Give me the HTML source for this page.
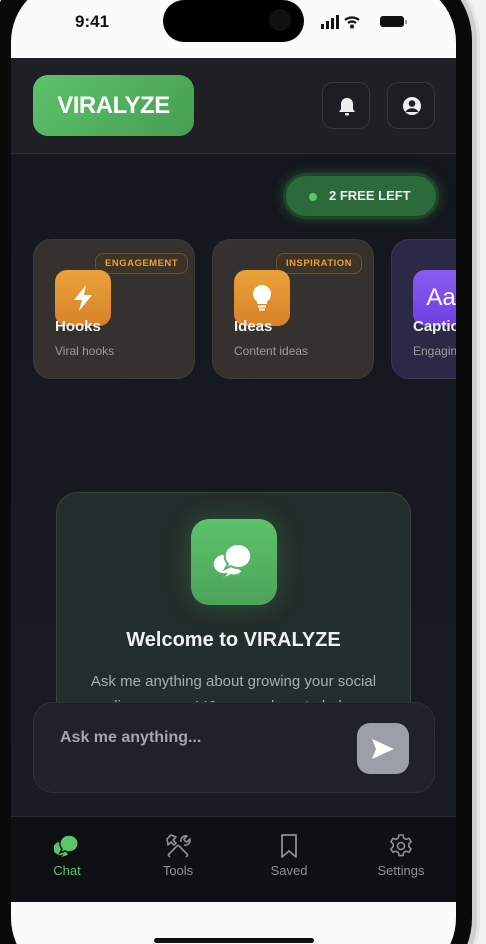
<!DOCTYPE html>
<html style="width:486px;height:944px;overflow:hidden"><head><meta charset="utf-8"><style>
*{box-sizing:border-box;margin:0;padding:0}
body{width:486px;height:944px;overflow:hidden;background:#f2f2f2;font-family:"Liberation Sans","DejaVu Sans",sans-serif;position:relative}
.wrap{position:absolute;left:0;top:0;width:486px;height:944px;overflow:hidden}
.rim{position:absolute;left:-14px;top:-40px;width:494px;height:1040px;border-radius:80px;background:#cfcfcf;border:3px solid #e6e6e6}
.bez{position:absolute;left:-10px;top:-36px;width:482px;height:1030px;border-radius:76px;background:#0a0a0a}
.screen{position:absolute;left:11px;top:-20px;width:445px;height:1000px;border-radius:62px;background:#fbfbfb;overflow:hidden}
.time{position:absolute;left:75px;top:12px;font-size:17px;font-weight:bold;color:#111}
.island{position:absolute;left:163px;top:0;width:141px;height:42px;border-radius:21px;background:#000}
.app{position:absolute;left:11px;top:58px;width:445px;height:844px;background:linear-gradient(#13161c,#1a1d24);overflow:hidden}
.hdr{position:absolute;left:0;top:0;width:445px;height:96px;background:#1e2025;border-bottom:1px solid #2a2d33}
.logo{position:absolute;left:22px;top:17px;width:161px;height:61px;border-radius:15px;background:linear-gradient(135deg,#5dc26a,#479e52);color:#fff;font-weight:900;font-size:24px;line-height:61px;text-align:center;letter-spacing:-0.5px}
.ib{position:absolute;top:24px;width:48px;height:47px;border-radius:11px;border:1px solid #33363c;background:#1c1e23}
.pill{position:absolute;left:272px;top:115px;width:156px;height:46px;border-radius:23px;background:#2d6a3b;border:3px solid #1f4529;box-shadow:0 0 12px rgba(70,160,90,.35);color:#e8efe9;font-weight:bold;font-size:13px;line-height:40px;padding-left:43px}
.pill:before{content:"";position:absolute;left:23px;top:17px;width:8px;height:8px;border-radius:50%;background:#5cc46a}
.card{position:absolute;top:181px;width:162px;height:140px;border-radius:18px;background:#35312f;border:1px solid #3e3a37}
.badge{position:absolute;top:13px;height:21px;border-radius:8px;border:1px solid #6b5228;background:#3f3325;color:#e4a23d;font-size:9.5px;font-weight:bold;line-height:19px;padding:0 9px;letter-spacing:.5px}
.ico{position:absolute;left:21px;top:30px;width:56px;height:56px;border-radius:12px;background:linear-gradient(#eba23a,#d7822a);display:flex;align-items:center;justify-content:center}
.ct{position:absolute;left:21px;top:78px;color:#f1f1f1;font-weight:900;font-size:15px}
.cs{position:absolute;left:21px;top:104px;color:#a09c98;font-size:12px}
.wel{position:absolute;left:45px;top:434px;width:355px;height:260px;border-radius:22px;background:#232d2b;border:1px solid #3a4540}
.wi{position:absolute;left:134px;top:26px;width:86px;height:86px;border-radius:18px;background:linear-gradient(#5dc26a,#4da35a);box-shadow:0 0 24px rgba(80,180,100,.3);display:flex;align-items:center;justify-content:center}
.wt{position:absolute;left:0;width:100%;top:136px;text-align:center;color:#eef0f1;font-weight:bold;font-size:20px}
.wp{position:absolute;left:0;width:100%;top:176px;text-align:center;color:#a8adb2;font-size:15px;line-height:25px}
.inp{position:absolute;left:22px;top:644px;width:402px;height:91px;border-radius:20px;background:#1f222a;border:1px solid #2c3038}
.ph{position:absolute;left:26px;top:26px;color:#a2a6ad;font-size:16px;font-weight:bold}
.send{position:absolute;left:323px;top:20px;width:52px;height:51px;border-radius:13px;background:#9b9fa8;display:flex;align-items:center;justify-content:center}
.nav{position:absolute;left:0;top:758px;width:445px;height:86px;background:#0e1014;border-top:1px solid #2b2e33}
.ni{position:absolute;top:16px;width:80px;text-align:center;color:#8b8f96;font-size:13px}
.ni svg{display:block;margin:0 auto 4px}
</style></head><body><div class="wrap">
<div class="rim"></div><div class="bez"></div>
<div class="screen"></div>
<div class="time">9:41</div>
<div class="island"><div style="position:absolute;left:106px;top:9px;width:22px;height:22px;border-radius:50%;background:#111"></div></div>
<svg style="position:absolute;left:321px;top:14px" width="90" height="16" viewBox="0 0 90 16"><rect x="0" y="10" width="3" height="5" fill="#111"/><rect x="5" y="7" width="3" height="8" fill="#111"/><rect x="10" y="4" width="3" height="11" fill="#111"/><rect x="15" y="1" width="3" height="14" fill="#111"/><path d="M24 6a11 11 0 0 1 14 0M27 9a6 6 0 0 1 8 0" stroke="#111" stroke-width="2.2" fill="none"/><circle cx="31" cy="12.5" r="2" fill="#111"/><rect x="59" y="2" width="24" height="11" rx="3" fill="#111"/><rect x="84" y="6" width="2" height="4" fill="#999"/></svg>
<div style="position:absolute;left:154px;top:938px;width:160px;height:5px;border-radius:3px;background:#111"></div>
<div class="app">
<div class="hdr">
<div class="logo">VIRALYZE</div>
<div class="ib" style="left:311px"><svg width="48" height="47" viewBox="0 0 48 47"><path d="M24 15c-4 0-6 3-6 6v5l-2 3h16l-2-3v-5c0-3-2-6-6-6z" fill="#eee"/><rect x="22" y="30" width="4" height="2.5" rx="1" fill="#eee"/></svg></div>
<div class="ib" style="left:376px"><svg width="48" height="47" viewBox="0 0 48 47"><circle cx="24" cy="23" r="9" fill="#eee"/><circle cx="24" cy="20.5" r="3.3" fill="#1c1e23"/><path d="M17.5 29a7 6 0 0 1 13 0" fill="#1c1e23"/></svg></div>
</div>
<div class="pill">2 FREE LEFT</div>
<div class="card" style="left:22px"><div class="badge" style="left:61px">ENGAGEMENT</div><div class="ico"><svg width="24" height="28" viewBox="0 0 24 28"><path d="M15 1L3 16h8l-3 11 13-16h-8z" fill="#fff"/></svg></div><div class="ct">Hooks</div><div class="cs">Viral hooks</div></div>
<div class="card" style="left:201px"><div class="badge" style="left:63px">INSPIRATION</div><div class="ico"><svg width="24" height="30" viewBox="0 0 24 30"><path d="M12 2a9 9 0 0 0-5 16.5V21h10v-2.5A9 9 0 0 0 12 2z" fill="#fff"/><rect x="8" y="22.5" width="8" height="2" fill="#fff"/><rect x="9" y="25.5" width="6" height="2" fill="#fff"/></svg></div><div class="ct">Ideas</div><div class="cs">Content ideas</div></div>
<div class="card" style="left:380px;background:#2b2946;border-color:#38355a"><div class="ico" style="background:linear-gradient(#8a5cf0,#6f3fe0);color:#fff;font-size:24px">Aa</div><div class="ct">Captions</div><div class="cs">Engaging captions</div></div>
<div class="wel"><div class="wi"><svg width="44" height="40" viewBox="0 0 44 40"><path d="M10 12a11 10 0 1 0 4 20l-3 5 8-4a11 10 0 0 0 11-3" fill="#fff" stroke="#58b565" stroke-width="2"/><path d="M26 2a13 12 0 1 1-7 22l-6 3 3-5A13 12 0 0 1 26 2z" fill="#fff" stroke="#58b565" stroke-width="2"/></svg></div>
<div class="wt">Welcome to VIRALYZE</div>
<div class="wp">Ask me anything about growing your social<br>media presence! I&amp;apos;m here to help you</div></div>
<div class="inp"><div class="ph">Ask me anything...</div><div class="send"><svg width="24" height="22" viewBox="0 0 24 22"><path d="M1 1l22 10L1 21l4-10z" fill="#fff"/></svg></div></div>
<div class="nav">
<div class="ni" style="left:16px;color:#5cc46a"><svg width="26" height="26" viewBox="0 0 26 26"><path d="M7 9a7 6.5 0 1 0 3 12l-3 3 7-2" fill="#5cc46a"/><path d="M15 2a9 8.5 0 1 1-4 16l-5 2 2-4A9 8.5 0 0 1 15 2z" fill="#5cc46a" stroke="#0e1014" stroke-width="1.5"/></svg>Chat</div>
<div class="ni" style="left:127px"><svg width="28" height="26" viewBox="0 0 28 26" fill="none" stroke="#8b8f96" stroke-width="1.6" stroke-linejoin="round"><path d="M4 22l10-10M3 6l4-4 5 2-3 3 3 3-2 2-3-3-3 3z"/><path d="M6 24l-2-2M24 22L14 12M17 9a5 5 0 0 1 6-6l-3 3 1 2 2 1 3-3a5 5 0 0 1-6 6"/><path d="M24 22l-2 2"/></svg>Tools</div>
<div class="ni" style="left:238px"><svg width="26" height="26" viewBox="0 0 26 26"><path d="M6 2h14v22l-7-6-7 6z" fill="none" stroke="#8b8f96" stroke-width="1.8" stroke-linejoin="round"/></svg>Saved</div>
<div class="ni" style="left:350px"><svg width="26" height="26" viewBox="0 0 26 26" fill="none" stroke="#8b8f96" stroke-width="1.6"><circle cx="13" cy="13" r="3.5"/><path d="M11 2h4l.7 3 2.4 1.4 3-1 2 3.4-2.3 2.1v2.8l2.3 2.1-2 3.4-3-1-2.4 1.4-.7 3h-4l-.7-3-2.4-1.4-3 1-2-3.4 2.3-2.1v-2.8L2.9 8.8l2-3.4 3 1L10.3 5z" stroke-linejoin="round"/></svg>Settings</div>
</div>
</div>
</div></body></html>
